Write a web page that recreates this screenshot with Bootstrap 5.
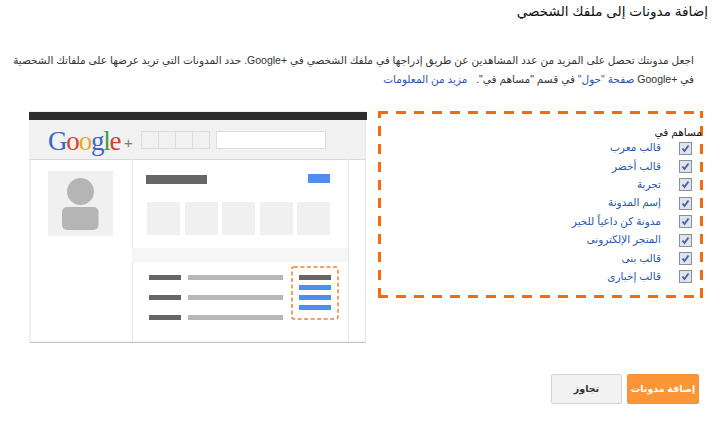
<!DOCTYPE html>
<html lang="ar" dir="rtl">
<head>
<meta charset="utf-8">
<title>إضافة مدونات</title>
<link href="https://cdn.jsdelivr.net/npm/bootstrap@5.3.0/dist/css/bootstrap.min.css" rel="stylesheet">
<style>
html,body{height:441px;overflow:hidden;background:#fff}
body{font-family:"Liberation Sans",Arial,"DejaVu Sans",sans-serif;font-size:11px;color:#222;padding:0 23px 0 24px}
.pg-title{font-size:13.6px;font-weight:400;color:#111;margin:0 -5px 0 0;padding-top:2px;line-height:20px;height:51px}
.pg-intro{font-size:10.5px;line-height:19px;height:60px;margin:0 -5px 0 -16px;padding-right:14px;color:#333}
.pg-intro a,.blog-name{color:#2a56ad;text-decoration:none}
.pick-box{width:325px;height:187px;border:0;padding:15px 1px 0 0;background:
 repeating-linear-gradient(90deg,#f26c0d 0 10px,transparent 10px 18px) top/100% 3px no-repeat,
 repeating-linear-gradient(90deg,#f26c0d 0 10px,transparent 10px 18px) bottom/100% 3px no-repeat,
 repeating-linear-gradient(0deg,#f26c0d 0 10px,transparent 10px 18px) right/3px 100% no-repeat,
 repeating-linear-gradient(0deg,#f26c0d 0 10px,transparent 10px 18px) left/3px 100% no-repeat}
.pick-head{font-size:10.5px;line-height:13px;color:#111;margin-bottom:0}
.pick-row{height:18.4px;font-size:10.5px;padding-right:10px;gap:18px}
.tick{flex:none;appearance:none;width:13px;height:13px;margin:0;border:1px solid #8e8f8f;background:#dde3f0 url("data:image/svg+xml,%3Csvg xmlns='http://www.w3.org/2000/svg' viewBox='0 0 11 11'%3E%3Cpath d='M2.5 5.5l2 2.5 4-5.5' fill='none' stroke='%234a5f97' stroke-width='1.8'/%3E%3C/svg%3E") center/11px no-repeat}
.mock-wrap{width:338px;height:232px;margin-top:0;margin-right:11px}
.mock-wrap svg{display:block}
.g-word{font-family:"Liberation Serif",serif;font-size:27px;letter-spacing:-1.2px}
.act-row{margin-top:31px;margin-left:3px;padding-right:4px;gap:5px}
.act-btn{height:30px;padding:0;font-size:9.5px;font-weight:700;border-radius:2px}
.act-go{width:72px;background:#fb9535;border:1px solid #f5903a;color:#fff}
.act-skip{width:71px;background:#f2f2f2;border:1px solid #d3d3d3;color:#333}
</style>
</head>
<body>
<h1 class="pg-title">إضافة مدونات إلى ملفك الشخصي</h1>
<p class="pg-intro">اجعل مدونتك تحصل على المزيد من عدد المشاهدين عن طريق إدراجها في ملفك الشخصي في +Google. حدد المدونات التي تريد عرضها على ملفاتك الشخصية في +Google <a href="#">صفحة "حول"</a> في قسم "مساهم في".&nbsp;&nbsp; <a href="#">مزيد من المعلومات</a></p>
<div class="d-flex align-items-start">
  <div class="pick-box">
    <div class="pick-head">مساهم في</div>
    <div class="pick-row d-flex align-items-center"><input class="tick" type="checkbox" checked aria-label="قالب معرب"><span class="blog-name">قالب معرب</span></div>
    <div class="pick-row d-flex align-items-center"><input class="tick" type="checkbox" checked aria-label="قالب أخضر"><span class="blog-name">قالب أخضر</span></div>
    <div class="pick-row d-flex align-items-center"><input class="tick" type="checkbox" checked aria-label="تجربة"><span class="blog-name">تجربة</span></div>
    <div class="pick-row d-flex align-items-center"><input class="tick" type="checkbox" checked aria-label="إسم المدونة"><span class="blog-name">إسم المدونة</span></div>
    <div class="pick-row d-flex align-items-center"><input class="tick" type="checkbox" checked aria-label="مدونة كن داعياً للخير"><span class="blog-name">مدونة كن داعياً للخير</span></div>
    <div class="pick-row d-flex align-items-center"><input class="tick" type="checkbox" checked aria-label="المتجر الإلكتروني"><span class="blog-name">المتجر الإلكترونى</span></div>
    <div class="pick-row d-flex align-items-center"><input class="tick" type="checkbox" checked aria-label="قالب بنى"><span class="blog-name">قالب بنى</span></div>
    <div class="pick-row d-flex align-items-center"><input class="tick" type="checkbox" checked aria-label="قالب إخبارى"><span class="blog-name">قالب إخبارى</span></div>
  </div>
  <div class="mock-wrap">
    <svg width="338" height="232" viewBox="29 112 338 232" direction="ltr">
      <rect x="30" y="113" width="335.500" height="230" fill="#fff" stroke="#e4e4e4"/>
      <rect x="30" y="343" width="335.500" height="1" fill="#c4c4c4"/>
      <rect x="29" y="113" width="338" height="8" fill="#2d2d2d"/>
      <rect x="30" y="121" width="335.500" height="39" fill="#f1f1f1"/>
      <line x1="30" y1="160.500" x2="365.500" y2="160.500" stroke="#d9d9d9"/>
      <text class="g-word" x="48" y="151"><tspan fill="#3a66c4">G</tspan><tspan fill="#d8402c">o</tspan><tspan fill="#e9a820">o</tspan><tspan fill="#3a66c4">g</tspan><tspan fill="#3f9a48">l</tspan><tspan fill="#d8402c">e</tspan></text>
      <text x="124" y="149" font-size="15" fill="#7a7a7a" font-family="Liberation Sans">+</text>
      <g fill="#f1f1f1" stroke="#dcdcdc">
        <rect x="141.500" y="132.500" width="17" height="17"/><rect x="158.500" y="132.500" width="17" height="17"/><rect x="175.500" y="132.500" width="17" height="17"/><rect x="192.500" y="132.500" width="17" height="17"/>
      </g>
      <rect x="216.500" y="132.500" width="109" height="17" fill="#fff" stroke="#dcdcdc"/>
      <line x1="132.500" y1="160" x2="132.500" y2="343" stroke="#e6e6e6"/>
      <line x1="348.500" y1="160" x2="348.500" y2="343" stroke="#e6e6e6"/>
      <rect x="48" y="172" width="65" height="65" fill="#f0f0f0"/>
      <circle cx="80.500" cy="192.500" r="13.500" fill="#b5b5b5"/>
      <rect x="62" y="208" width="36.500" height="23" rx="5" fill="#b5b5b5"/>
      <rect x="146" y="176" width="61" height="9" fill="#666"/>
      <rect x="308" y="175" width="22" height="9" fill="#4d8ef0"/>
      <g fill="#f0f0f0">
        <rect x="147" y="203" width="33" height="33"/><rect x="185" y="203" width="33" height="33"/><rect x="222" y="203" width="33" height="33"/><rect x="260" y="203" width="33" height="33"/><rect x="297" y="203" width="33" height="33"/>
      </g>
      <rect x="132" y="249" width="216" height="14" fill="#f6f6f6"/>
      <g fill="#666"><rect x="149" y="276" width="32" height="5"/><rect x="149" y="296" width="32" height="5"/><rect x="149" y="316" width="32" height="5"/><rect x="299" y="276" width="32" height="5"/></g>
      <g fill="#b8b8b8"><rect x="188" y="276" width="95" height="5"/><rect x="188" y="296" width="95" height="5"/><rect x="188" y="316" width="95" height="5"/></g>
      <g fill="#4d8ef0"><rect x="299" y="286" width="32" height="5"/><rect x="299" y="296" width="32" height="5"/><rect x="299" y="306" width="32" height="5"/></g>
      <rect x="292" y="268" width="46" height="52" rx="2" fill="none" stroke="#e8843a" stroke-width="1.500" stroke-dasharray="4 2.500"/>
    </svg>
  </div>
</div>
<div class="act-row d-flex">
  <button type="button" class="btn act-btn act-go">إضافة مدونات</button>
  <button type="button" class="btn act-btn act-skip">تجاوز</button>
</div>
</body>
</html>
